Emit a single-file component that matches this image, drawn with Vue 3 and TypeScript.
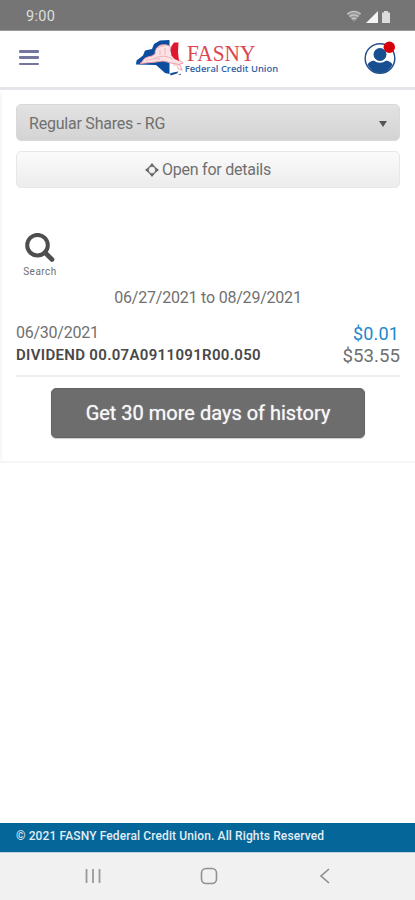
<script setup lang="ts">
interface Transaction {
  date: string
  description: string
  amount: string
  balance: string
}

const account = 'Regular Shares - RG'
const range = { from: '06/27/2021', to: '08/29/2021' }
const transactions: Transaction[] = [
  { date: '06/30/2021', description: 'DIVIDEND 00.07A0911091R00.050', amount: '$0.01', balance: '$53.55' },
]
</script>

<template>
  <div class="screen">
    <div class="status">
      <span class="clock">9:00</span>
      <svg class="status-icons" width="46" height="16" viewBox="0 0 46 16">
        <path d="M1 4.500Q8 -1 15 4.500L8 13Z" fill="#999" />
        <path d="M1.300 5Q8 -.3 14.700 5M3.500 7.600Q8 4 12.500 7.600M5.700 10Q8 8.200 10.300 10" fill="none" stroke="#cacaca" stroke-width="1.300" />
        <path d="M20 14L32 2V14Z" fill="#f4f4f4" />
        <path d="M36 3.500H38V2H42V3.500H44V14H36Z" fill="#dcdcdc" />
      </svg>
    </div>

    <header class="header">
      <button class="menu" aria-label="Menu"><i></i><i></i><i></i></button>
      <svg class="logo" width="146" height="42" viewBox="0 0 146 42" role="img">
        <path d="M2 27.500L2.500 23.500L9 18.500L11 13.500L18 12L20 7L26 3.500L35.500 3V37L31 36L26 31.500L22 28L2 27.500Z" fill="#0b4ea0" />
        <path d="M8 25Q10 20 18 19L21 17Q21 10 27 8Q34 7 36.500 10L38 19L45 23L49 26L45 27.500L37 26Q29 22.500 22 25L6 26.500Z" fill="#fae3e5" stroke="#ef9da5" stroke-width="1" />
        <path d="M24 11Q26 8.500 30 9M26 13V18M31 11V18M20 21Q30 17 39 22M12 23.500Q20 21 26 22" fill="none" stroke="#efa5ac" stroke-width=".8" />
        <path d="M37.500 9L40 5.500H44.500L44 15L45 24L40.500 22L37.500 18.500L36.500 13Z" fill="#de1830" />
        <path d="M39 28L46 28L48 33L45 32L43 29.500" fill="none" stroke="#f0b1b7" stroke-width="1.200" />
        <path d="M36 36.500L39 35.500L44.500 34.500L43 36.500L36.500 38.500ZM44 37.500L46.500 36.800L47 38Z" fill="#174d98" />
        <text x="53" y="23.500" class="logo-name" textLength="68.500" lengthAdjust="spacingAndGlyphs">FASNY</text>
        <text x="50.700" y="35" class="logo-sub" textLength="93.500" lengthAdjust="spacingAndGlyphs">Federal Credit Union</text>
      </svg>
      <svg class="profile" width="34" height="34" viewBox="0 0 34 34">
        <circle cx="17" cy="17.500" r="14.800" fill="#fff" stroke="#26508c" stroke-width="1.500" />
        <circle cx="17" cy="13.500" r="6.500" fill="#174f91" />
        <path d="M4.500 23.500Q6 20.500 10.500 19.500Q17 24 23.500 19.500Q28 20.500 29.500 23.500Q25.500 32 17 32Q8.500 32 4.500 23.500Z" fill="#174f91" />
        <circle cx="26.300" cy="6.200" r="5.700" fill="#d6000a" />
      </svg>
    </header>

    <main class="panel">
      <button class="select"><span class="t-select">{{ account }}</span><i class="caret"></i></button>
      <button class="details">
        <svg width="14" height="14" viewBox="0 0 14 14" fill="#656565">
          <path d="M7 0L10 3.800H4ZM7 14L4 10.200H10ZM0 7L3.800 4V10ZM14 7L10.200 10V4Z" />
          <path d="M4.200 4.200L7 3L9.800 4.200L11 7L9.800 9.800L7 11L4.200 9.800L3 7Z" fill="none" stroke="#777" stroke-width="1.300" />
        </svg>
        <span class="t-details">Open for details</span>
      </button>

      <div class="search">
        <svg width="30" height="30" viewBox="0 0 30 30" fill="none" stroke="#4e4e4e">
          <circle cx="12.500" cy="12.200" r="10.300" stroke-width="4" />
          <path d="M20 19.500L27 26.500" stroke-width="4.600" stroke-linecap="round" />
        </svg>
        <span>Search</span>
      </div>

      <p class="range">{{ range.from }} to {{ range.to }}</p>

      <div v-for="item in transactions" :key="item.description" class="row">
        <div class="left">
          <span class="date">{{ item.date }}</span>
          <strong class="description">{{ item.description }}</strong>
        </div>
        <div class="right">
          <span class="amount">{{ item.amount }}</span>
          <span class="balance">{{ item.balance }}</span>
        </div>
      </div>
      <button class="more"><span>Get 30 more days of history</span></button>
    </main>

    <footer class="footer"><span>© 2021 FASNY Federal Credit Union. All Rights Reserved</span></footer>
    <nav class="nav">
      <svg width="16" height="16" viewBox="0 0 16 16"><path d="M1.500 1V15M8 1V15M14.500 1V15" stroke="#999" stroke-width="1.800" /></svg>
      <svg width="18" height="18" viewBox="0 0 18 18"><rect x="1.500" y="1.500" width="15" height="15" rx="4.500" fill="none" stroke="#909090" stroke-width="1.600" /></svg>
      <svg width="16" height="16" viewBox="0 0 16 16"><path d="M12 1L4 8L12 15" fill="none" stroke="#8b8b8b" stroke-width="1.600" /></svg>
    </nav>
  </div>
</template>

<style>
body {
  margin: 0;
  background: #fff;
}
</style>

<style scoped>
.screen {
  width: 415px;
  height: 900px;
  display: flex;
  flex-direction: column;
  overflow: hidden;
  background: #fff;
  font-family: Roboto, sans-serif;
  color: #707070;
}
.screen * { box-sizing: border-box; }
.screen span, .screen strong { white-space: nowrap; }
button {
  font: inherit;
  color: inherit;
  margin: 0;
  padding: 0;
  border: 0;
  background: none;
}
svg { display: block; flex: none; }
.status {
  height: 31px;
  flex: none;
  display: flex;
  justify-content: space-between;
  align-items: center;
  padding: 3px 23px 0 26px;
  background: #757575;
  border-bottom: 1px solid #989898;
}
.clock { font-size: 14.500px; color: #dedede; letter-spacing: 0.300px; }
.header {
  height: 59px;
  flex: none;
  display: flex;
  align-items: center;
  justify-content: space-between;
  padding: 0 18px 3px 19px;
  background: #fff;
  border-bottom: 3px solid #e4e6e9;
}
.menu {
  width: 20px;
  height: 15px;
  display: flex;
  flex-direction: column;
  justify-content: space-between;
}
.menu i { height: 2.500px; width: 20px; background: #7476a0; border-radius: 1px; }
.logo { margin-left: 11px; }
.logo-name { font-family: "Liberation Serif", serif; font-size: 23px; fill: #dc4652; }
.logo-sub { font-family: "Open Sans", sans-serif; font-size: 9px; font-weight: 600; fill: #3263a3; }
.panel {
  height: 371px;
  flex: none;
  margin-top: 2px;
  padding: 12px 15px 0 14px;
  display: flex;
  flex-direction: column;
  border-left: 2px solid #f8f8f8;
  border-bottom: 2px solid #f5f5f5;
}
.select {
  height: 37px;
  flex: none;
  display: flex;
  align-items: center;
  justify-content: space-between;
  padding: 1px 12px 0 12px;
  border: 1px solid #d9d9d9;
  border-radius: 5px;
  background: linear-gradient(#e2e2e2, #d4d4d4);
  font-size: 16px;
}
.t-select { letter-spacing: -0.220px; }
.t-details { letter-spacing: -0.250px; }
.caret {
  border: 4.500px solid transparent;
  border-top: 6px solid #555;
  border-bottom: 0;
  margin-top: 2px;
}
.details {
  height: 37px;
  flex: none;
  margin-top: 10px;
  display: flex;
  align-items: center;
  justify-content: center;
  gap: 3px;
  border: 1px solid #e7e7e7;
  border-radius: 5px;
  background: linear-gradient(#fbfbfb, #ececec);
  font-size: 16px;
}
.search {
  width: 47px;
  height: 46px;
  flex: none;
  margin-top: 45px;
  display: flex;
  flex-direction: column;
  align-items: center;
  font-size: 10px;
  line-height: 14px;
  letter-spacing: 0.500px;
}
.search svg { margin-left: 1px; }
.search span { margin: 2px 0 0 1px; }
.range {
  margin: 9px 0 0;
  line-height: 20px;
  text-align: center;
  font-size: 16px;
  letter-spacing: -0.210px;
}
.row {
  height: 69px;
  flex: none;
  display: flex;
  justify-content: space-between;
  padding-top: 14px;
  border-bottom: 2px solid #ededed;
}
.left, .right { display: flex; flex-direction: column; line-height: 22px; }
.right { align-items: flex-end; font-size: 18px; padding-top: 1px; }
.date { font-size: 16px; letter-spacing: -0.250px; }
.description { font-size: 15px; font-weight: 600; letter-spacing: 0.320px; color: #484848; }
.amount { margin-right: 1px; color: #2288ca; letter-spacing: 0.150px; }
.balance { font-size: 18.700px; }
.more {
  width: 314px;
  height: 50px;
  flex: none;
  margin: 11px 0 0 35px;
  border: 1px solid #646464;
  border-radius: 5px;
  background: #6d6d6d;
  box-shadow: 0 1px 1px #ccc;
  color: #f7f7f7;
  font-size: 20px;
}
.more span { text-shadow: 0 0 1px #ddd; }
.footer {
  height: 29px;
  flex: none;
  margin-top: auto;
  padding-left: 16px;
  background: #056699;
  color: #e2edf4;
  font-size: 12px;
  font-weight: 500;
  line-height: 26px;
  letter-spacing: 0.120px;
}
.nav {
  height: 48px;
  flex: none;
  display: flex;
  align-items: center;
  justify-content: space-between;
  padding: 0 82px 2px 85px;
  background: #f1f1f1;
  border-top: 1px solid #bed5e1;
}
</style>
